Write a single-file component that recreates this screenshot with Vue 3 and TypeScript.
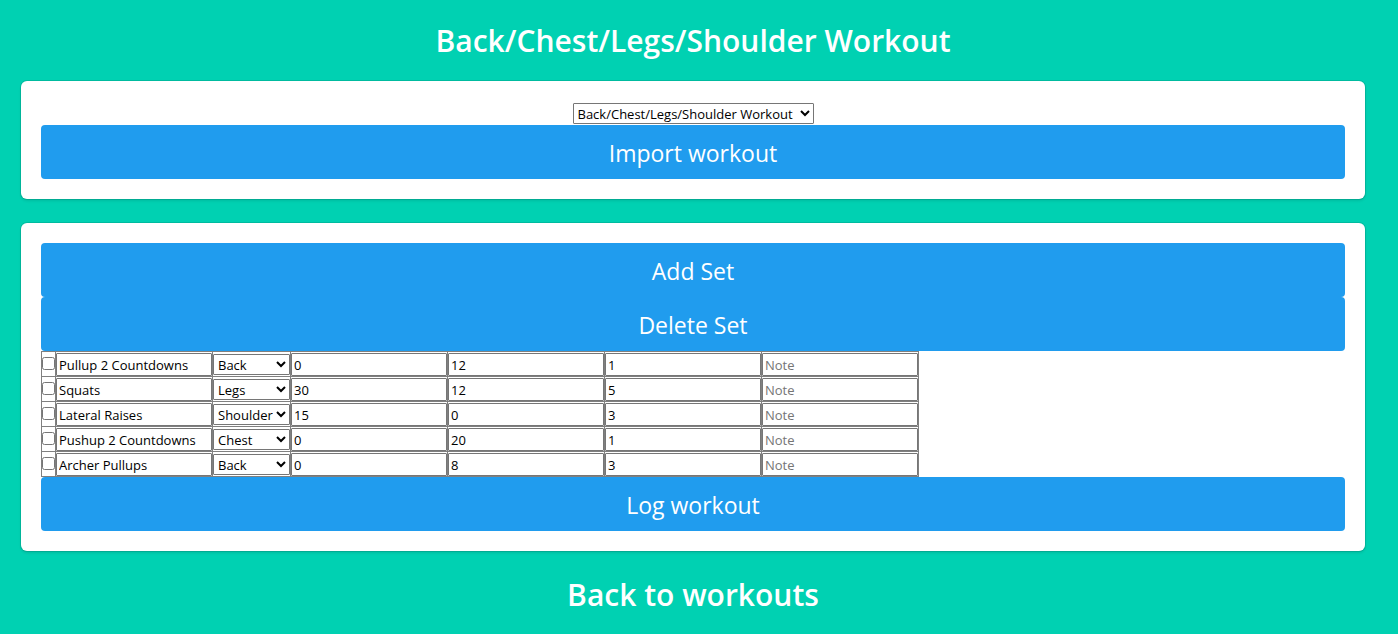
<script setup lang="ts">
import { reactive, ref } from 'vue'

interface WorkoutSet {
  id: number
  selected: boolean
  exercise: string
  group: string
  weight: number
  reps: number
  sets: number
  note: string
}

const title = 'Back/Chest/Legs/Shoulder Workout'
const template = ref(title)
const groups = ['Back', 'Chest', 'Legs', 'Shoulder']

let nextId = 0
function makeSet(exercise = '', group = 'Back', weight = 0, reps = 0, sets = 0): WorkoutSet {
  return { id: nextId++, selected: false, exercise, group, weight, reps, sets, note: '' }
}

const rows = reactive<WorkoutSet[]>([
  makeSet('Pullup 2 Countdowns', 'Back', 0, 12, 1),
  makeSet('Squats', 'Legs', 30, 12, 5),
  makeSet('Lateral Raises', 'Shoulder', 15, 0, 3),
  makeSet('Pushup 2 Countdowns', 'Chest', 0, 20, 1),
  makeSet('Archer Pullups', 'Back', 0, 8, 3),
])

function addSet() {
  rows.push(makeSet())
}

function deleteSets() {
  rows.splice(0, rows.length, ...rows.filter((row) => !row.selected))
}
</script>

<template>
  <main class="page">
    <h1 class="title">{{ title }}</h1>

    <section class="box">
      <div class="picker">
        <select v-model="template" class="select template" aria-label="Workout">
          <option>{{ title }}</option>
        </select>
      </div>
      <button type="button" class="button">Import workout</button>
    </section>

    <section class="box">
      <button type="button" class="button" @click="addSet">Add Set</button>
      <button type="button" class="button" @click="deleteSets">Delete Set</button>
      <table class="sets">
        <tbody>
          <tr v-for="row in rows" :key="row.id">
            <td class="cell"><input v-model="row.selected" class="check" type="checkbox" aria-label="Select set" /></td>
            <td class="cell"><input v-model="row.exercise" class="field" type="text" aria-label="Exercise" /></td>
            <td class="cell">
              <select v-model="row.group" class="select group" aria-label="Muscle group">
                <option v-for="group in groups" :key="group">{{ group }}</option>
              </select>
            </td>
            <td class="cell"><input v-model="row.weight" class="field" type="text" aria-label="Weight" /></td>
            <td class="cell"><input v-model="row.reps" class="field" type="text" aria-label="Reps" /></td>
            <td class="cell"><input v-model="row.sets" class="field" type="text" aria-label="Sets" /></td>
            <td class="cell"><input v-model="row.note" class="field" type="text" placeholder="Note" aria-label="Note" /></td>
          </tr>
        </tbody>
      </table>
      <button type="button" class="button">Log workout</button>
    </section>

    <h2 class="title"><a class="back" href="#">Back to workouts</a></h2>
  </main>
</template>

<style>
html {
  background: #00d1b2;
}
</style>

<style scoped>
.page {
  padding: 21px 33px 16px 21px;
  font-family: 'Segoe UI', 'Open Sans', 'Noto Sans', sans-serif;
  font-size: 16px;
  line-height: 24px;
  color: #4a4a4a;
}

.title {
  margin: 0 0 20px;
  font-size: 30px;
  line-height: 40px;
  font-weight: 600;
  text-align: center;
  color: #fff;
}

.back {
  color: inherit;
  text-decoration: none;
}

.box {
  margin-bottom: 24px;
  padding: 20px;
  background: #fff;
  border-radius: 6px;
  box-shadow: 0 2px 3px rgba(10, 10, 10, 0.1), 0 0 0 1px rgba(10, 10, 10, 0.1);
}

.picker {
  display: flex;
  justify-content: center;
  padding: 2px 0 1px;
}

.button {
  display: block;
  width: 100%;
  height: 54px;
  margin: 0;
  padding: 2px 18px 0;
  border: 0;
  border-radius: 4px;
  background: #209cee;
  color: #fff;
  font-family: inherit;
  font-size: 23px;
  line-height: 36px;
  cursor: pointer;
}

.select,
.field {
  box-sizing: border-box;
  margin: 0;
  background-color: #fff;
  color: #000;
  font-family: inherit;
  font-size: 13px;
}

.select {
  display: block;
  height: 21px;
  border: 1px solid #767676;
  border-radius: 1px;
}

.template {
  width: 241px;
}

.group {
  width: 77px;
}

.sets {
  border-collapse: collapse;
  border-spacing: 0;
}

.cell {
  padding: 0;
  border: 1px solid #808080;
  vertical-align: middle;
}

.check {
  display: block;
  width: 13px;
  height: 13px;
  margin: 0 0 2px;
}

.field {
  display: block;
  width: 156px;
  height: 23px;
  margin-top: 1px;
  padding: 2px 2px 1px;
  border: 1px solid #767676;
  border-radius: 1px;
}

.field::placeholder {
  color: #757575;
}
</style>
